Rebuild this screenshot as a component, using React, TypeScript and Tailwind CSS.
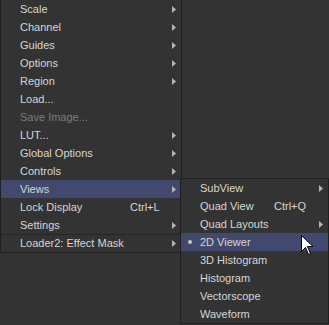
import React from 'react';

type Item = {
  label: string;
  sub?: boolean;
  shortcut?: string;
  disabled?: boolean;
  active?: boolean;
  bullet?: boolean;
  sep?: boolean;
};

const mainItems: Item[] = [
  { label: 'Scale', sub: true },
  { label: 'Channel', sub: true },
  { label: 'Guides', sub: true },
  { label: 'Options', sub: true },
  { label: 'Region', sub: true },
  { label: 'Load...' },
  { label: 'Save Image...', disabled: true },
  { label: 'LUT...', sub: true },
  { label: 'Global Options', sub: true },
  { label: 'Controls', sub: true },
  { label: 'Views', sub: true, active: true },
  { label: 'Lock Display', shortcut: 'Ctrl+L' },
  { label: 'Settings', sub: true },
  { label: 'Loader2: Effect Mask', sub: true, sep: true },
];

const viewItems: Item[] = [
  { label: 'SubView', sub: true },
  { label: 'Quad View', shortcut: 'Ctrl+Q' },
  { label: 'Quad Layouts', sub: true },
  { label: '2D Viewer', active: true, bullet: true },
  { label: '3D Histogram' },
  { label: 'Histogram' },
  { label: 'Vectorscope' },
  { label: 'Waveform' },
];

const Arrow = () => (
  <svg width="4" height="7" viewBox="0 0 4 7" className="shrink-0">
    <path d="M0 0 L4 3.5 L0 7 Z" fill="#b4b4b4" />
  </svg>
);

const Row = ({ item, shortcutW }: { item: Item; shortcutW: number }) => (
  <div
    className={`relative flex h-[18px] items-center pl-[19px] pr-[5px] ${
      item.active ? 'bg-[#414a6e]' : ''
    } ${item.sep ? 'border-t border-[#252525]' : ''}`}
  >
    {item.bullet && (
      <span className="absolute left-[7px] top-[7px] h-[4px] w-[4px] rounded-full bg-[#c8c8c8]" />
    )}
    <span className={`flex-1 whitespace-nowrap ${item.disabled ? 'text-[#7c7c7c]' : 'text-[#d6d6d6]'}`}>
      {item.label}
    </span>
    {item.shortcut && (
      <span className="whitespace-nowrap text-[#d6d6d6]" style={{ width: shortcutW }}>
        {item.shortcut}
      </span>
    )}
    <span className="flex w-[4px] justify-end">{item.sub && <Arrow />}</span>
  </div>
);

const Cursor = () => (
  <svg width="13" height="22" viewBox="0 0 13 22" className="absolute left-[301px] top-[235px]">
    <path
      d="M0.5 0.5 L0.5 16.5 L4.5 12.5 L7.5 19.5 L9.5 18.5 L6.5 11.5 L12 11.5 Z"
      fill="#ffffff"
      stroke="#000000"
      strokeWidth="1"
    />
  </svg>
);

export default function App() {
  return (
    <div
      className="relative h-[325px] w-[329px] overflow-hidden bg-[#333333] text-[11px] leading-none"
      style={{ fontFamily: '"Liberation Sans", Tahoma, sans-serif' }}
    >
      <div className="w-[182px] border-x border-b border-[#1f1f1f]">
        {mainItems.map((it) => (
          <Row key={it.label} item={it} shortcutW={42} />
        ))}
      </div>

      <div className="absolute left-[180px] top-[178px] w-[149px] border border-[#1f1f1f] bg-[#333333]">
        {viewItems.map((it) => (
          <Row key={it.label} item={it} shortcutW={45} />
        ))}
      </div>

      <Cursor />
    </div>
  );
}
